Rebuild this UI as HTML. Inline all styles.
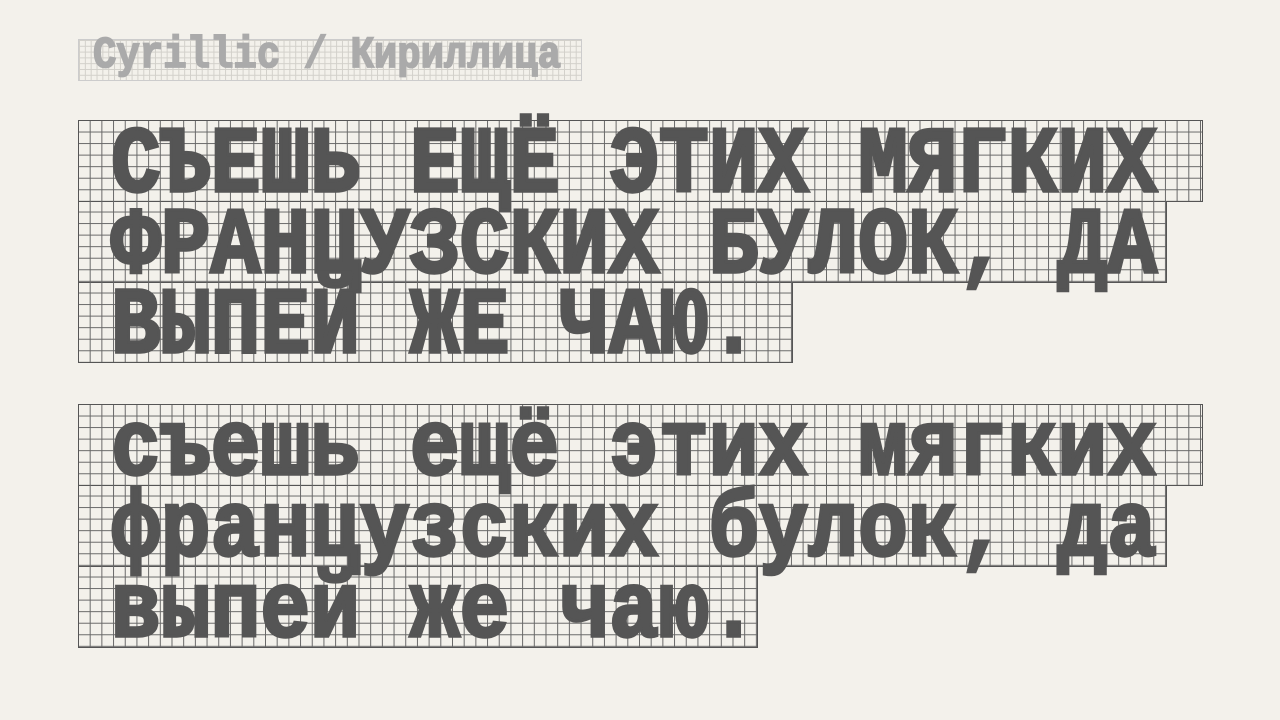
<!DOCTYPE html>
<html><head><meta charset="utf-8"><style>
html,body{margin:0;padding:0;background:#f3f1eb;width:1280px;height:720px;overflow:hidden;position:relative}
.g{position:absolute;box-sizing:border-box;border:1px solid #555;
background-image:linear-gradient(to right,#666 1px,transparent 1px),linear-gradient(to bottom,#666 1px,transparent 1px);
background-size:11.7px 11.55px;background-position:-1px -1px}
.lbl{position:absolute;left:78px;top:39px;width:504px;height:42px;box-sizing:border-box;border:1px solid #ccc;
background-image:linear-gradient(to right,#d2d0ca 1px,transparent 1px),linear-gradient(to bottom,#d2d0ca 1px,transparent 1px);
background-size:5.85px 5.8px}
.t{position:absolute;left:111px;font-family:"Liberation Mono","DejaVu Sans Mono",monospace;font-weight:bold;font-size:83px;color:#555;-webkit-text-stroke:3px #555;white-space:pre;line-height:1;transform:scaleY(1.13);transform-origin:0 63.6px}
.l{position:absolute;left:93px;top:38px;font-family:"Liberation Mono",monospace;font-weight:bold;font-size:39px;color:#aaa;-webkit-text-stroke:1.5px #aaa;white-space:pre;line-height:1;transform:scaleY(1.15);transform-origin:0 30px}
</style></head><body>
<div class="lbl"></div>
<div class="l">Cyrillic / Кириллица</div>

<div class="g" style="left:78px;top:120px;width:1125px;height:82px"></div>
<div class="g" style="left:78px;top:201px;width:1089px;height:82px;border-top:none"></div>
<div class="g" style="left:78px;top:282px;width:715px;height:81px;border-top:none"></div>

<div class="g" style="left:78px;top:404px;width:1125px;height:82px"></div>
<div class="g" style="left:78px;top:485px;width:1089px;height:82px;border-top:none"></div>
<div class="g" style="left:78px;top:566px;width:680px;height:82px;border-top:none"></div>

<div class="t" style="top:128px">СЪЕШЬ ЕЩЁ ЭТИХ МЯГКИХ</div>
<div class="t" style="top:209px">ФРАНЦУЗСКИХ БУЛОК, ДА</div>
<div class="t" style="top:289px">ВЫПЕЙ ЖЕ ЧАЮ.</div>

<div class="t" style="top:411px">съешь ещё этих мягких</div>
<div class="t" style="top:492px">французских булок, да</div>
<div class="t" style="top:573px">выпей же чаю.</div>
</body></html>
